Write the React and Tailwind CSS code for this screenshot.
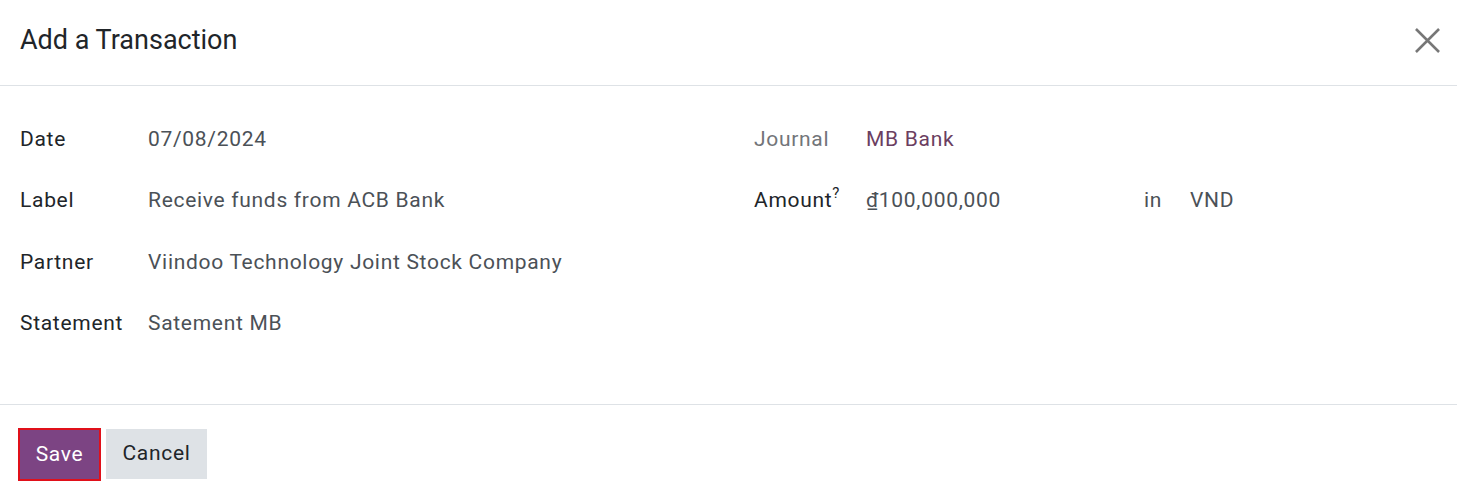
export default function App() {
  const font = { fontFamily: "Roboto, 'Noto Sans', sans-serif" };
  return (
    <div className="w-[1457px] h-[499px] bg-white flex flex-col text-[#212529]" style={font}>
      <div className="h-[86px] flex items-center justify-between pl-5 pr-4 border-b border-[#dee2e6]">
        <h1 className="text-[27px] leading-none font-normal text-[#212529] -mt-[4px]">Add a Transaction</h1>
        <button className="w-[28px] h-[28px] flex items-center justify-center -mt-[4px]">
          <svg width="25" height="25" viewBox="0 0 26 26">
            <path d="M1 1 L25 25 M25 1 L1 25" stroke="#777" strokeWidth="2.7" fill="none" />
          </svg>
        </button>
      </div>
      <div className="h-[319px] border-b border-[#dee2e6] pt-[22.5px] pl-5 grid grid-cols-[734px_1fr] text-[21px] tracking-[0.7px]">
        <div className="flex flex-col">
          {[
            ["Date", "07/08/2024"],
            ["Label", "Receive funds from ACB Bank"],
            ["Partner", "Viindoo Technology Joint Stock Company"],
            ["Statement", "Satement MB"],
          ].map(([l, v]) => (
            <div key={l} className="flex items-center h-[61.5px]">
              <div className="w-[128px] text-[#212529]">{l}</div>
              <div className="text-[#4b5157]">{v}</div>
            </div>
          ))}
        </div>
        <div className="flex flex-col">
          <div className="flex items-center h-[61.5px]">
            <div className="w-[112px] text-[#727579]">Journal</div>
            <div className="text-[#6b3e61]">MB Bank</div>
          </div>
          <div className="flex items-center h-[61.5px]">
            <div className="w-[112px] text-[#212529] relative">
              Amount<span className="absolute text-[15px] leading-none top-[1px]">?</span>
            </div>
            <div className="w-[278px] text-[#4b5157]">₫100,000,000</div>
            <div className="w-[46px] text-[#4b5157]">in</div>
            <div className="text-[#4b5157]">VND</div>
          </div>
        </div>
      </div>
      <div className="flex items-start gap-[5px] pl-[18px] pt-[23px] tracking-[0.7px]">
        <button className="w-[83px] h-[53px] bg-[#7c4483] border-[2px] border-[#e0101a] text-white text-[21px] flex items-center justify-center">
          Save
        </button>
        <button className="w-[101px] h-[50px] mt-[1px] bg-[#dee2e6] text-[#212529] text-[21px] flex items-center justify-center">
          Cancel
        </button>
      </div>
    </div>
  );
}
